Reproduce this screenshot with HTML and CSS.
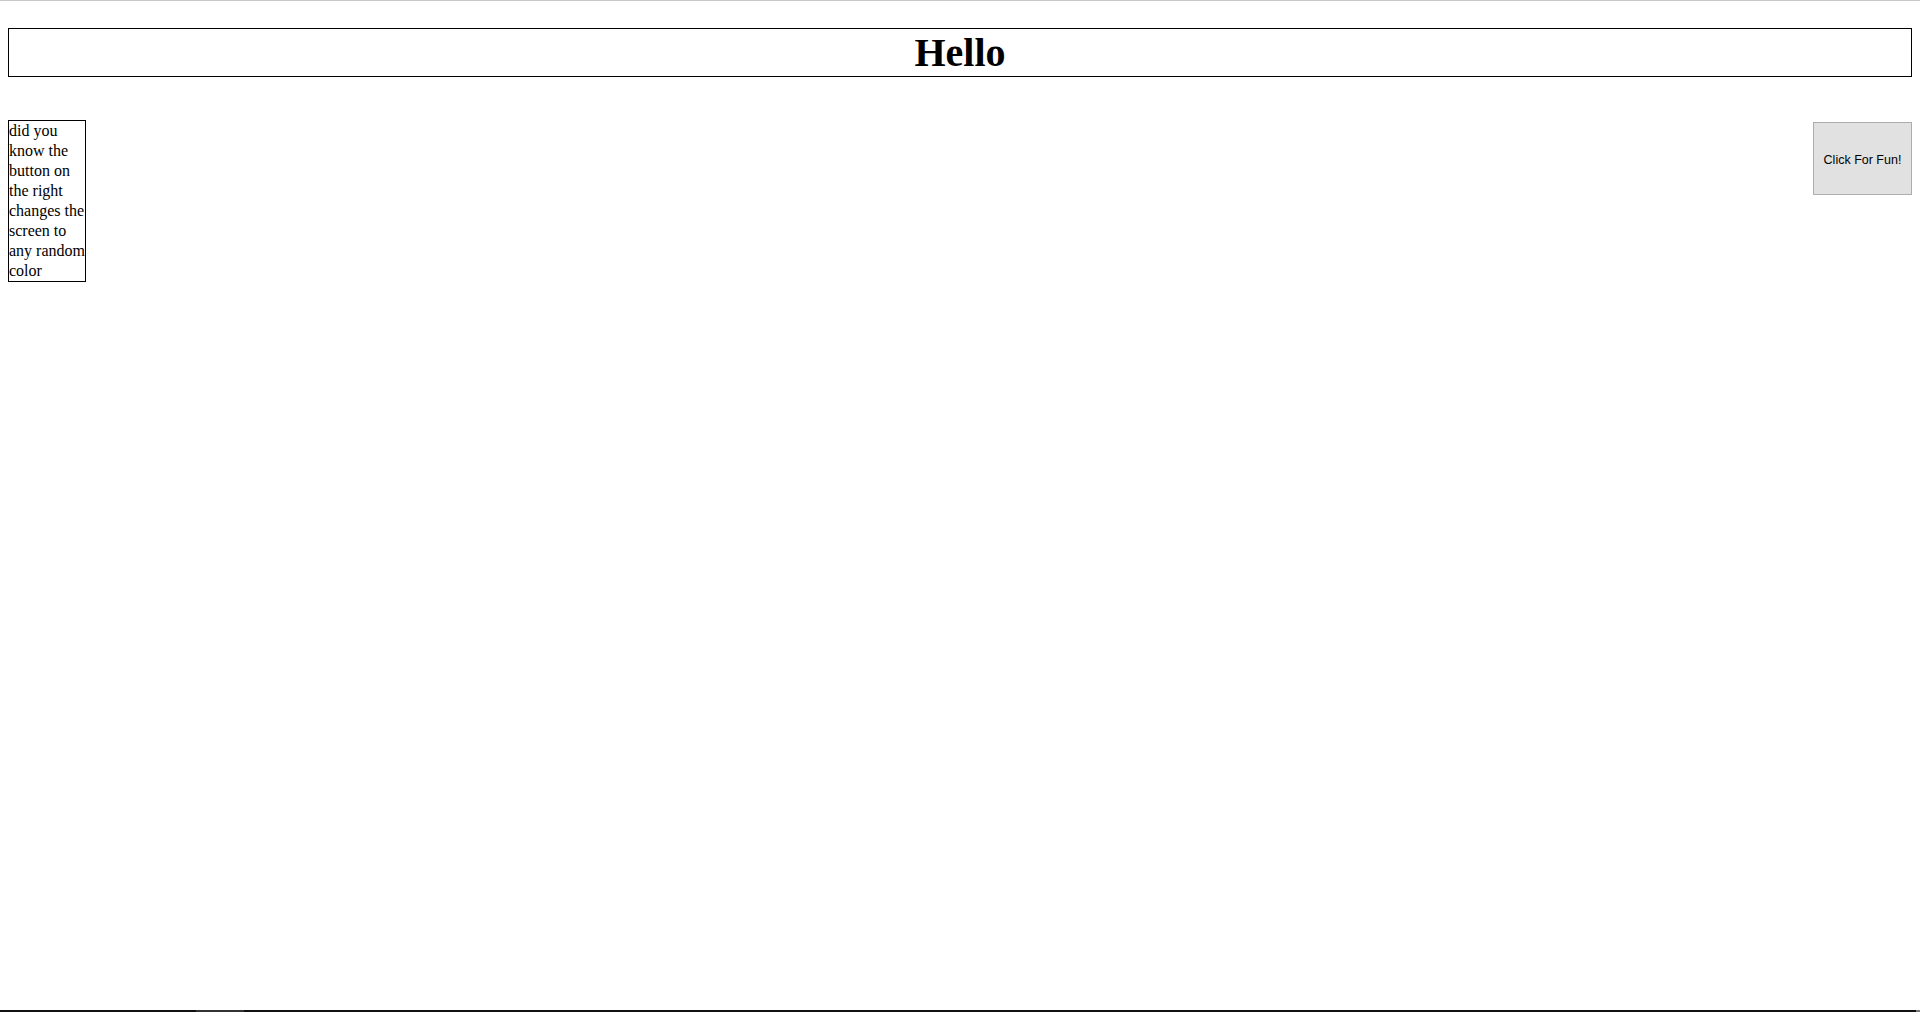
FILE: index.html
```html
<!DOCTYPE html>
<html>
<head>
<meta charset="utf-8">
<title>Hello</title>
<link rel="stylesheet" href="styles.css">
</head>
<body>
<div class="topline"></div>
<main class="page">
  <h1 class="title">Hello</h1>
  <div class="row">
    <div class="note">did you know the button on the right changes the screen to any random color</div>
    <button class="fun-btn">Click For Fun!</button>
  </div>
</main>
<div class="bottombar"><span class="seg-a"></span><span class="seg-b"></span><span class="seg-c"></span><span class="seg-d"></span></div>
</body>
</html>
```
FILE: styles.css
```css
html, body {
  margin: 0;
  padding: 0;
  background: #ffffff;
}
body {
  height: 100vh;
  display: flex;
  flex-direction: column;
  font-family: "Liberation Serif", "Times New Roman", serif;
  color: #000;
}
.topline {
  height: 1px;
  background: #c8c8c8;
  flex: none;
}
.page {
  padding: 0 8px;
  flex: 1;
}
.title {
  margin: 27px 0 0;
  border: 1px solid #000;
  font-size: 40px;
  line-height: 47px;
  font-weight: bold;
  text-align: center;
}
.row {
  margin-top: 43px;
  display: flex;
  justify-content: space-between;
  align-items: flex-start;
}
.note {
  width: 76.2px;
  border: 1px solid #000;
  font-size: 16px;
  line-height: 20px;
}
.fun-btn {
  margin-top: 2px;
  width: 99px;
  height: 73px;
  background: #e1e1e1;
  border: 1px solid #adadad;
  border-radius: 0;
  font-family: "Liberation Sans", Arial, sans-serif;
  font-size: 12.5px;
  color: #000;
  padding: 3px 0 0;
}
.bottombar {
  flex: none;
  height: 2px;
  display: flex;
  background: #111111;
}
.seg-a { width: 196px; }
.seg-b { width: 48px; background: #333333; }
.seg-c { flex: 1; }
.seg-d { width: 4px; background: #777777; }
```
